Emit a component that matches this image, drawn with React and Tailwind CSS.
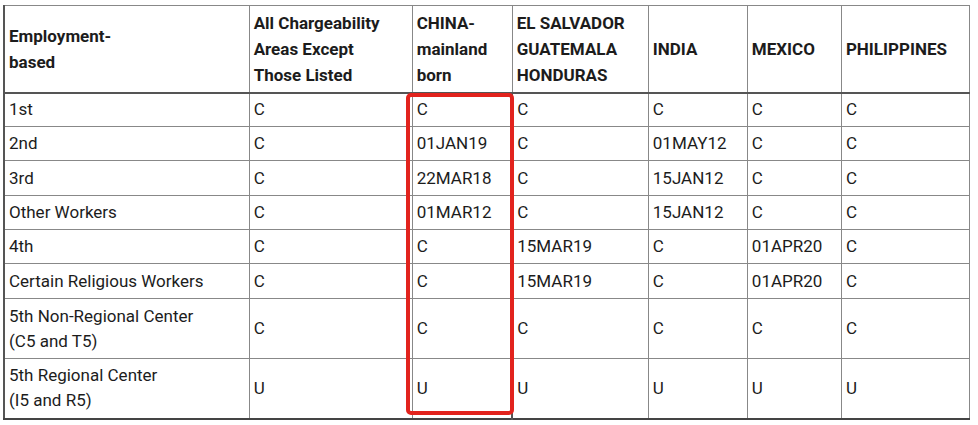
import React from "react";

const headers = [
  ["Employment-", "based"],
  ["All Chargeability", "Areas Except", "Those Listed"],
  ["CHINA-", "mainland", "born"],
  ["EL SALVADOR", "GUATEMALA", "HONDURAS"],
  ["INDIA"],
  ["MEXICO"],
  ["PHILIPPINES"],
];

const widths = ["w-[245px]", "w-[163px]", "w-[100px]", "w-[136px]", "w-[99px]", "w-[94px]", "w-[128px]"];

const rows = [
  { label: ["1st"], cells: ["C", "C", "C", "C", "C", "C"], h: "h-[34px]" },
  { label: ["2nd"], cells: ["C", "01JAN19", "C", "01MAY12", "C", "C"], h: "h-[34px]" },
  { label: ["3rd"], cells: ["C", "22MAR18", "C", "15JAN12", "C", "C"], h: "h-[35px]" },
  { label: ["Other Workers"], cells: ["C", "01MAR12", "C", "15JAN12", "C", "C"], h: "h-[34px]" },
  { label: ["4th"], cells: ["C", "C", "15MAR19", "C", "01APR20", "C"], h: "h-[34px]" },
  { label: ["Certain Religious Workers"], cells: ["C", "C", "15MAR19", "C", "01APR20", "C"], h: "h-[35px]" },
  { label: ["5th Non-Regional Center", "(C5 and T5)"], cells: ["C", "C", "C", "C", "C", "C"], h: "h-[60px]" },
  { label: ["5th Regional Center", "(I5 and R5)"], cells: ["U", "U", "U", "U", "U", "U"], h: "h-[60px]" },
];

export default function App() {
  return (
    <div
      className="relative w-[978px] h-[425px] bg-white pt-[5px] pl-[3px] text-[#1c1c1c]"
      style={{ fontFamily: "Roboto, 'Liberation Sans', sans-serif" }}
    >
      <table className="border-collapse table-fixed w-[967px] border-l-2 border-b-2 border-l-[#555] border-b-[#444] border-t border-r border-t-[#888] border-r-[#888]">
        <thead>
          <tr className="h-[87px] border-b-2 border-b-[#555]">
            {headers.map((h, i) => (
              <th
                key={i}
                className={`${widths[i]} border-r border-[#888] px-[4px] text-left align-middle font-bold text-[17px] leading-[26px]`}
              >
                {h.map((line, j) => (
                  <div key={j}>{line}</div>
                ))}
              </th>
            ))}
          </tr>
        </thead>
        <tbody>
          {rows.map((r, i) => (
            <tr key={i} className={`${r.h} border-b border-[#888]`}>
              <td className="border-r border-[#888] px-[4px] align-middle text-[17px] leading-[25px]">
                {r.label.map((line, j) => (
                  <div key={j}>{line}</div>
                ))}
              </td>
              {r.cells.map((c, j) => (
                <td
                  key={j}
                  className={`border-r border-[#888] px-[4px] align-middle text-[17px] leading-[25px] ${j === 2 ? "border-l-2 border-l-[#555]" : ""}`}
                >
                  {c}
                </td>
              ))}
            </tr>
          ))}
        </tbody>
      </table>
      <div className="absolute left-[406px] top-[93px] w-[108px] h-[322px] border-[4px] border-[#e2231d] rounded-[5px]" />
    </div>
  );
}
